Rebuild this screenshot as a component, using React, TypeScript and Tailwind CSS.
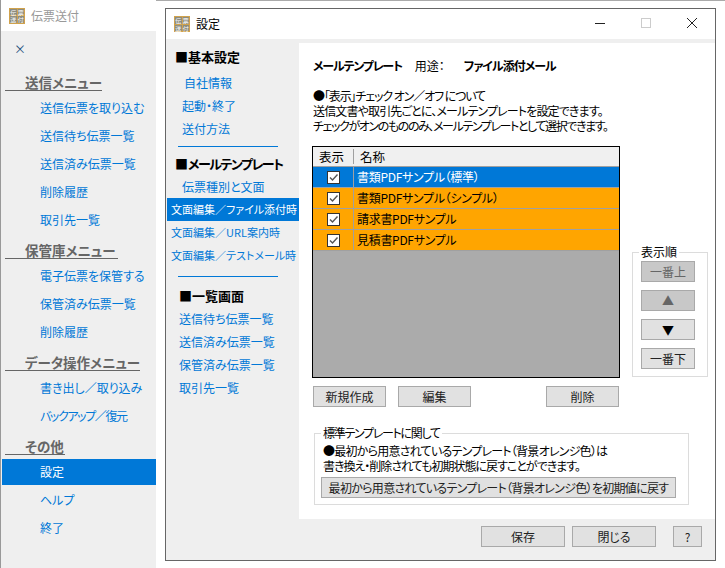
const font = { fontFamily: '"Noto Sans CJK JP", "Liberation Sans", sans-serif', fontFeatureSettings: '"palt"' };

function AppIcon() {
  return (
    <div className="grid h-4 w-4 shrink-0 grid-cols-2 grid-rows-2 gap-px border border-[#d0a24c] bg-[#d0a24c] text-center text-[6px] leading-[7px] text-white">
      <span className="bg-[#8c8c80]">伝</span>
      <span className="bg-[#8c8c80]">票</span>
      <span className="bg-[#8c8c80]">送</span>
      <span className="bg-[#8c8c80]">付</span>
    </div>
  );
}

function MenuHeading({ label, width }: { label: string; width: string }) {
  return (
    <div className={`${width} mt-[6px] ml-[3px] flex h-[20px] items-end border-b border-[#666] pl-5 text-[13.5px] leading-[15px] font-bold whitespace-nowrap text-[#666]`}>
      {label}
    </div>
  );
}

function MenuItem({ label, active }: { label: string; active?: boolean }) {
  // katakana runs come out wider than the reference, so pull this one in
  const tight = label.startsWith('バックアップ') ? 'tracking-[-1.4px]' : '';
  return (
    <div className={`flex h-[26px] items-center pl-[38px] text-[12px] whitespace-nowrap ${tight} ${active ? 'bg-[#0078d7] text-white' : 'text-[#0078d7]'}`}>
      {label}
    </div>
  );
}

function MenuGroup({ items, active }: { items: string[]; active?: string }) {
  return (
    <div className="mt-[4px] flex flex-col gap-[2px]">
      {items.map((item) => (
        <MenuItem key={item} label={item} active={item === active} />
      ))}
    </div>
  );
}

function NavLink({ label, pad }: { label: string; pad: string }) {
  return <div className={`flex h-[23px] items-center ${pad} text-[12px] whitespace-nowrap text-[#0078d7]`}>{label}</div>;
}

function NavSmall({ label, active }: { label: string; active?: boolean }) {
  return (
    <div className={`ml-px flex h-[23px] items-center pl-1 text-[11px] whitespace-nowrap ${active ? 'bg-[#0078d7] text-white' : 'text-[#0078d7]'}`}>
      {label}
    </div>
  );
}

function Btn({ label, className, disabled }: { label: string; className: string; disabled?: boolean }) {
  return (
    <div className={`flex h-[21px] items-center justify-center border border-[#a9a9a9] text-[12px] whitespace-nowrap ${disabled ? 'bg-[#c8c8c8] text-[#666]' : 'bg-[#e1e1e1] text-[#222]'} ${className}`}>
      {label}
    </div>
  );
}

function Row({ label, selected }: { label: string; selected?: boolean }) {
  return (
    <div className={`flex h-[21px] border-b border-[#a0a0a0] ${selected ? 'h-[20px] bg-[#0078d7] text-white' : 'bg-[#ffa500] text-black'}`}>
      <div className="flex w-[41px] items-center justify-center border-r border-[#a0a0a0]">
        <div className="flex h-[13px] w-[13px] items-center justify-center border border-[#333] bg-white">
          <svg viewBox="0 0 11 11" className="h-[11px] w-[11px]" fill="none" stroke="#555" strokeWidth="1.4">
            <path d="M2 5.5 L4.5 8 L9.5 2.5" />
          </svg>
        </div>
      </div>
      <div className="flex items-center pl-[3px] text-[12px] tracking-[-0.3px] whitespace-nowrap">{label}</div>
    </div>
  );
}

export default function App() {
  return (
    <div className="relative h-[568px] w-[725px] overflow-hidden bg-white" style={font}>
      <div className="absolute top-0 left-[156px] h-px w-[569px] bg-[#aaa]" />

      {/* Main window behind */}
      <div className="absolute top-0 left-0 h-[568px] w-[156px] border-l border-[#999]">
        <div className="flex h-[31px] items-center gap-[6px] bg-white pl-[8px]">
          <AppIcon />
          <span className="text-[12px] text-[#999]">伝票送付</span>
        </div>
        <div className="h-[537px] bg-[#efefef] pl-px">
          <div className="flex h-[34px] items-center pt-[2px] pl-[12px] text-[12px] text-[#1f4f80]">×</div>
          <MenuHeading label="送信メニュー" width="w-[97px]" />
          <MenuGroup items={['送信伝票を取り込む', '送信待ち伝票一覧', '送信済み伝票一覧', '削除履歴', '取引先一覧']} />
          <MenuHeading label="保管庫メニュー" width="w-[113px]" />
          <MenuGroup items={['電子伝票を保管する', '保管済み伝票一覧', '削除履歴']} />
          <MenuHeading label="データ操作メニュー" width="w-[135px]" />
          <MenuGroup items={['書き出し／取り込み', 'バックアップ／復元']} />
          <MenuHeading label="その他" width="w-[60px]" />
          <MenuGroup items={['設定', 'ヘルプ', '終了']} active="設定" />
        </div>
      </div>

      {/* Settings dialog */}
      <div className="absolute top-[8px] left-[165px] flex h-[553px] w-[551px] flex-col border border-[#666] bg-[#efefef]">
        <div className="flex h-[30px] shrink-0 items-center bg-white pl-[8px]">
          <AppIcon />
          <span className="ml-[6px] text-[12px] text-black">設定</span>
          <div className="ml-auto flex items-center">
            <svg viewBox="0 0 46 30" className="h-[30px] w-[46px]" stroke="#222" fill="none"><path d="M18 14.5h10" /></svg>
            <svg viewBox="0 0 46 30" className="h-[30px] w-[46px]" stroke="#ccc" fill="none"><rect x="18.5" y="9.5" width="9" height="9" /></svg>
            <svg viewBox="0 0 46 30" className="h-[30px] w-[46px]" stroke="#222" fill="none"><path d="M18 9l10 10M28 9l-10 10" /></svg>
          </div>
        </div>

        <div className="mt-[4px] flex min-h-0 flex-1">
          {/* Sidebar */}
          <div className="w-[133px] shrink-0 pt-[3px]">
            <div className="pl-[9px] text-[13px] leading-[22px] font-bold whitespace-nowrap text-black">■基本設定</div>
            <div className="mt-[3px]">
              <NavLink label="自社情報" pad="pl-[18px]" />
              <NavLink label="起動・終了" pad="pl-[16px]" />
              <NavLink label="送付方法" pad="pl-[16px]" />
            </div>
            <div className="mt-[6px] ml-[12px] w-[100px] border-t border-[#0078d7]" />
            <div className="mt-[6px] pl-[9px] text-[13px] leading-[22px] font-bold whitespace-nowrap text-black">
              ■<span className="tracking-[-1.5px]">メールテンプレート</span>
            </div>
            <NavLink label="伝票種別と文面" pad="pl-[16px]" />
            <NavSmall label="文面編集／ファイル添付時" active />
            <NavSmall label="文面編集／URL案内時" />
            <NavSmall label="文面編集／テストメール時" />
            <div className="mt-[9px] ml-[12px] w-[100px] border-t border-[#0078d7]" />
            <div className="mt-[8px] pl-[13px] text-[13px] leading-[22px] font-bold whitespace-nowrap text-black">■一覧画面</div>
            <NavLink label="送信待ち伝票一覧" pad="pl-[13px]" />
            <NavLink label="送信済み伝票一覧" pad="pl-[13px]" />
            <NavLink label="保管済み伝票一覧" pad="pl-[13px]" />
            <NavLink label="取引先一覧" pad="pl-[13px]" />
          </div>

          {/* Content */}
          <div className="flex-1 bg-white pt-[13px] pl-[14px] text-[12px] text-black">
            <div className="flex h-[20px] items-center whitespace-nowrap">
              <span className="font-bold tracking-[-1.2px]">メールテンプレート</span>
              <span className="ml-[13px]">用途：</span>
              <span className="ml-[19px] font-bold tracking-[-1px]">ファイル添付メール</span>
            </div>
            <div className="mt-[12px] leading-[15px] whitespace-nowrap">
              <div className="tracking-[-1.1px]">●「表示」チェック オン／オフ について</div>
              <div className="tracking-[-0.85px]">送信文書や取引先ごとに、メールテンプレートを設定できます。</div>
              <div className="tracking-[-1.4px]">チェックがオンのもののみ、メールテンプレートとして選択できます。</div>
            </div>

            <div className="mt-[13px] -ml-px flex gap-[12px]">
              <div className="h-[232px] w-[308px] border border-black bg-[#ababab]">
                <div className="flex h-[20px] items-center border-b border-[#a0a0a0] bg-[#f0f0f0] text-[12.5px]">
                  <div className="w-[41px] border-r border-[#a0a0a0] pl-[6px] leading-[15px]">表示</div>
                  <div className="pl-[6px] leading-[15px]">名称</div>
                </div>
                <Row label="書類PDFサンプル（標準）" selected />
                <Row label="書類PDFサンプル（シンプル）" />
                <Row label="請求書PDFサンプル" />
                <Row label="見積書PDFサンプル" />
              </div>

              <fieldset className="mt-[99px] h-[132px] w-[76px] border border-[#dcdcdc] pt-[2px] pl-[8px]">
                <legend className="-ml-[2px] px-[2px] text-[12px] leading-[14px]">表示順</legend>
                <div className="flex flex-col gap-[8px]">
                  <Btn label="一番上" className="w-[54px]" disabled />
                  <Btn label="▲" className="w-[54px]" disabled />
                  <Btn label="▼" className="w-[54px] text-black" />
                  <Btn label="一番下" className="w-[54px]" />
                </div>
              </fieldset>
            </div>

            <div className="mt-[8px] flex">
              <Btn label="新規作成" className="w-[73px]" />
              <Btn label="編集" className="ml-[12px] w-[73px]" />
              <Btn label="削除" className="ml-[75px] w-[73px]" />
            </div>

            <fieldset className="mt-[19px] ml-px h-[79px] w-[375px] border border-[#dcdcdc] px-[6px]">
              <legend className="px-[2px] text-[12px] leading-[14px] tracking-[-1.3px]">標準テンプレートに関して</legend>
              <div className="pt-[3px] pl-[2px] leading-[15px] whitespace-nowrap">
                <div className="tracking-[-0.75px]">●最初から用意されているテンプレート（背景オレンジ色）は</div>
                <div className="tracking-[-1px]">書き換え・削除されても初期状態に戻すことができます。</div>
              </div>
              <Btn label="最初から用意されているテンプレート（背景オレンジ色）を初期値に戻す" className="mt-[4px] w-[355px] tracking-[-0.7px]" />
            </fieldset>
          </div>
        </div>

        {/* Footer */}
        <div className="flex h-[41px] shrink-0 items-start justify-end pt-[7px] pr-[13px]">
          <Btn label="保存" className="w-[84px]" />
          <Btn label="閉じる" className="ml-[7px] w-[84px]" />
          <Btn label="?" className="ml-[17px] w-[29px]" />
        </div>
      </div>
    </div>
  );
}
